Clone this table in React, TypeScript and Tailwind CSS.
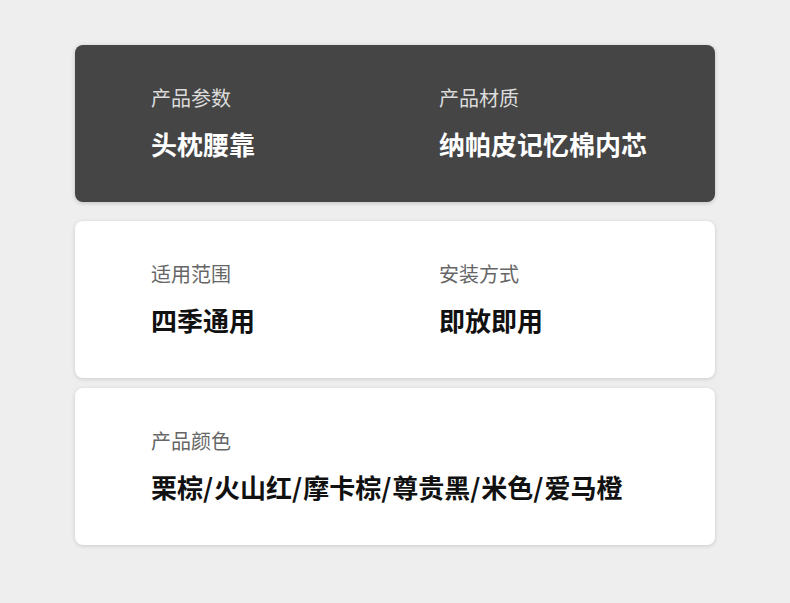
import React from "react";

const font = { fontFamily: '"Noto Sans CJK SC", "Noto Sans", sans-serif' };

function Value({ text }: { text: string }) {
  const parts = text.split("/");
  return (
    <>
      {parts.map((p, i) => (
        <React.Fragment key={i}>
          {i > 0 && <span className="tracking-[1px]">/</span>}
          {p}
        </React.Fragment>
      ))}
    </>
  );
}

function Item({ label, value, dark }: { label: string; value: string; dark?: boolean }) {
  return (
    <div className="flex flex-col">
      <div className={`text-[20px] leading-[20px] ${dark ? "text-[#dcdcdc]" : "text-[#666666]"}`}>{label}</div>
      <div className={`mt-[23px] text-[26px] leading-[26px] font-bold whitespace-nowrap ${dark ? "text-white" : "text-[#111111]"}`}>
        <Value text={value} />
      </div>
    </div>
  );
}

export default function App() {
  return (
    <div className="w-[790px] h-[603px] bg-[#eeeeee] overflow-hidden" style={font}>
      <div className="pt-[45px] pl-[75px] w-[715px] flex flex-col">
        <div className="h-[157px] rounded-[8px] bg-[#454545] shadow-[0_1px_4px_rgba(0,0,0,0.2)] pt-[43px] pl-[76px] grid grid-cols-[288px_1fr]">
          <Item label="产品参数" value="头枕腰靠" dark />
          <Item label="产品材质" value="纳帕皮记忆棉内芯" dark />
        </div>
        <div className="mt-[19px] h-[157px] rounded-[8px] bg-white shadow-[0_1px_4px_rgba(0,0,0,0.15)] pt-[43px] pl-[76px] grid grid-cols-[288px_1fr]">
          <Item label="适用范围" value="四季通用" />
          <Item label="安装方式" value="即放即用" />
        </div>
        <div className="mt-[10px] h-[157px] rounded-[8px] bg-white shadow-[0_1px_4px_rgba(0,0,0,0.15)] pt-[43px] pl-[76px] flex">
          <Item label="产品颜色" value="栗棕/火山红/摩卡棕/尊贵黑/米色/爱马橙" />
        </div>
      </div>
    </div>
  );
}
